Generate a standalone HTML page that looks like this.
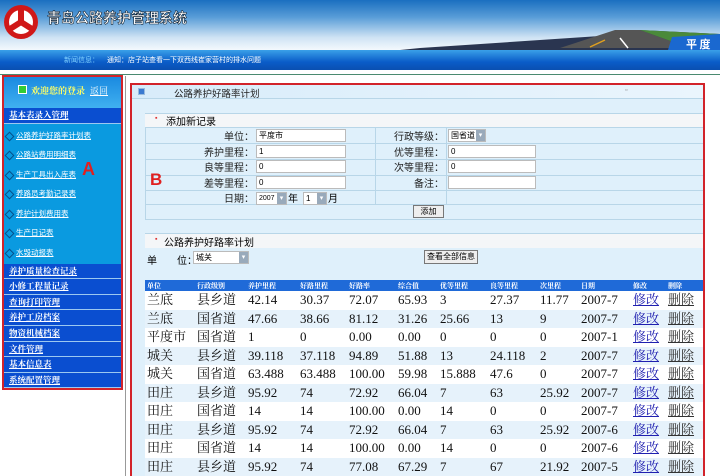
<!DOCTYPE html><html><head><meta charset="utf-8"><style>
*{margin:0;padding:0;box-sizing:border-box}
body{width:720px;height:476px;overflow:hidden;background:#fff;font-family:"Liberation Sans","Noto Sans CJK SC",sans-serif;position:relative;font-size:9px}
.abs{position:absolute}
#hdr{left:0;top:0;width:720px;height:50px;background:linear-gradient(180deg,#1a6fc0 0%,#5a9ed8 35%,#cfe3f4 75%,#f4f9fd 100%)}
#nav{left:0;top:50px;width:720px;height:20px;background:linear-gradient(180deg,#3aa0e8,#0a5cc8 60%,#0a4fb0)}
#line{left:0;top:70px;width:720px;height:5px;background:#fff;border-bottom:1px solid #4a8a70}
#side{left:2px;top:75px;width:121px;height:315px;border:2px solid #d2232a;background:#0a9ae0;overflow:hidden}
.mi{height:15.6px;background:#0a4ed0;border-bottom:1px solid #9cc8f0;color:#fff;font-weight:bold;font-size:8.5px;padding-left:5px;line-height:15px;text-decoration:underline;font-family:"Liberation Serif","Noto Serif CJK SC",serif}
.sub{height:19.5px;color:#fff;font-size:7.5px;padding-left:12px;line-height:18px;text-decoration:underline;position:relative}
.sub:before{content:"";position:absolute;left:2px;top:6px;width:5px;height:5px;border:1px solid #06508a;transform:rotate(45deg)}
#main{left:130px;top:83px;width:575px;height:393px;border:2px solid #d2232a;border-bottom:none;background:#dff0fb}
.lbl{position:absolute;text-align:right;font-size:10px;color:#222}
.inp{position:absolute;height:13px;background:#fff;border:1px solid #bbb;font-size:8px;line-height:11px;padding-left:2px;white-space:nowrap;overflow:hidden}
.dd{position:absolute;right:0;top:0;width:9px;height:11px;background:#9ab;color:#fff;font-size:7px;text-align:center}
.hl{position:absolute;left:145px;width:558px;height:1px;background:#b8d6e8}
table{position:absolute;left:145px;top:280px;width:558px;border-collapse:collapse;font-family:"Liberation Serif","Noto Serif CJK SC",serif;table-layout:fixed}
th{background:#1f6ad8;color:#fff;font-size:7px;text-align:left;height:11px;line-height:10px;padding:0 0 0 2px;font-weight:bold;overflow:hidden;white-space:nowrap}
td{font-size:13px;height:18.5px;line-height:14px;padding:0 0 0 2px;color:#111;white-space:nowrap;overflow:hidden}
tr:nth-child(even) td{background:#fff}
tr:nth-child(odd) td{background:#e6f2fb}
td a{color:#2020b0;text-decoration:underline}
td b{color:#333;font-weight:normal;text-decoration:underline}
</style></head><body>
<div id="hdr" class="abs"></div>
<svg class="abs" style="left:0;top:0" width="720" height="52">
<path d="M420 48 L600 36 L640 30 L720 34 L720 50 L400 50Z" fill="#2a3550"/>
<path d="M560 48 L615 30 L640 30 L690 48Z" fill="#555"/>
<path d="M640 30 L690 48 L720 48 L720 34Z" fill="#4a8a3a"/>
<path d="M590 47 L605 40" stroke="#e0a020" stroke-width="1.5"/>
<path d="M628 48 L620 38" stroke="#fff" stroke-width="1.5"/>
<path d="M672 37 L720 34 L720 50 L668 50Z" fill="#1a68d0"/>
<circle cx="21" cy="22" r="17" fill="#d01818"/><circle cx="21" cy="22" r="12" fill="#fff"/>
<path d="M21 22 L21 10 M21 22 L10 29 M21 22 L32 29" stroke="#d01818" stroke-width="6"/>
<text x="47" y="23" font-size="14" font-weight="bold" fill="#fff" stroke="#123" stroke-width="0.6" font-family="Noto Sans CJK SC">青岛公路养护管理系统</text>
<text x="686" y="48" font-size="11" font-weight="bold" fill="#fff" font-family="Noto Sans CJK SC">平 度</text>
</svg>
<div id="nav" class="abs"><span class="abs" style="left:64px;top:5px;color:#7fd0ff;font-size:7px">新闻信息：</span><span class="abs" style="left:107px;top:5px;color:#fff;font-size:7px">通知：店子站查看一下双西线崔家营村的排水问题</span></div>
<div id="line" class="abs"></div>
<div class="abs" style="left:125px;top:76px;width:1px;height:400px;background:#999"></div>
<div id="side" class="abs">
<div style="height:31px;background:linear-gradient(#1a8ae0,#40b0f0);position:relative"><div class="abs" style="left:14px;top:8px;width:9px;height:9px;background:#3c3;border:1px solid #fff"></div><span class="abs" style="left:27px;top:7px;color:#ff6;font-weight:bold;font-size:9px;font-family:'Noto Serif CJK SC',serif">欢迎您的登录</span><span class="abs" style="left:86px;top:7px;color:#fff;font-size:9px;text-decoration:underline;font-family:'Noto Serif CJK SC',serif">返回</span></div>
<div class="mi">基本表录入管理</div>
<div style="height:140px;padding-top:3px;overflow:hidden">
<div class="sub">公路养护好路率计划表</div><div class="sub">公路站费用明细表</div><div class="sub">生产工具出入库表</div><div class="sub">养路员考勤记录表</div><div class="sub">养护计划费用表</div><div class="sub">生产日记表</div><div class="sub">水毁动报表</div></div>
<div class="mi">养护质量检查记录</div><div class="mi">小修工程量记录</div><div class="mi">查询打印管理</div><div class="mi">养护工房档案</div><div class="mi">物资机械档案</div><div class="mi">文件管理</div><div class="mi">基本信息表</div><div class="mi">系统配置管理</div>
<span class="abs" style="left:78px;top:82px;color:#e02020;font-size:18px;font-weight:bold">A</span>
</div>
<div id="main" class="abs">
<div class="abs" style="left:0;top:0;width:571px;height:14px;background:linear-gradient(90deg,#d8ecfa,#eaf5fd);border-bottom:1px solid #b8d6e8"></div>
<div class="abs" style="left:6px;top:3px;width:7px;height:7px;background:#3a7ad0;border:1px solid #9bd"></div>
<span class="abs" style="left:42px;top:1px;font-size:9.5px;color:#222">公路养护好路率计划</span>
<span class="abs" style="left:493px;top:2px;font-size:7px;color:#888">▫</span>
</div>
<div class="abs" style="left:145px;top:113px;width:558px;height:14px;background:#f4f6f8;border-top:1px solid #b8d6e8"></div>
<span class="abs" style="left:155px;top:115px;color:#d33;font-size:7px">▪</span><span class="abs" style="left:166px;top:113px;font-size:10px">添加新记录</span>
<div class="hl" style="top:127px"></div><div class="hl" style="top:143px"></div><div class="hl" style="top:159px"></div><div class="hl" style="top:175px"></div><div class="hl" style="top:190px"></div><div class="hl" style="top:204px"></div><div class="hl" style="top:219px"></div>
<div class="abs" style="left:145px;top:127px;width:1px;height:92px;background:#b8d6e8"></div>
<div class="abs" style="left:375px;top:127px;width:1px;height:77px;background:#b8d6e8"></div>
<div class="abs" style="left:446px;top:127px;width:1px;height:77px;background:#b8d6e8"></div>
<div class="lbl" style="left:180px;width:74px;top:128px">单位：</div><div class="inp" style="left:256px;top:129px;width:90px">平度市</div>
<div class="lbl" style="left:180px;width:74px;top:144px">养护里程：</div><div class="inp" style="left:256px;top:145px;width:90px">1</div>
<div class="lbl" style="left:180px;width:74px;top:159px">良等里程：</div><div class="inp" style="left:256px;top:160px;width:90px">0</div>
<div class="lbl" style="left:180px;width:74px;top:175px">差等里程：</div><div class="inp" style="left:256px;top:176px;width:90px">0</div>
<div class="lbl" style="left:180px;width:74px;top:190px">日期：</div>
<div class="inp" style="left:256px;top:192px;width:31px;font-size:7px">2007<span class="dd">▾</span></div><span class="abs" style="left:288px;top:190px;font-size:10px">年</span>
<div class="inp" style="left:303px;top:192px;width:24px">1<span class="dd">▾</span></div><span class="abs" style="left:328px;top:190px;font-size:10px">月</span>
<div class="lbl" style="left:380px;width:64px;top:128px">行政等级：</div><div class="inp" style="left:448px;top:129px;width:38px">国省道<span class="dd">▾</span></div>
<div class="lbl" style="left:380px;width:64px;top:144px">优等里程：</div><div class="inp" style="left:448px;top:145px;width:88px">0</div>
<div class="lbl" style="left:380px;width:64px;top:159px">次等里程：</div><div class="inp" style="left:448px;top:160px;width:88px">0</div>
<div class="lbl" style="left:380px;width:64px;top:175px">备注：</div><div class="inp" style="left:448px;top:176px;width:88px"></div>
<div class="abs" style="left:413px;top:205px;width:31px;height:13px;border:1px solid #777;background:#eee;font-size:8px;text-align:center;line-height:11px">添加</div>
<span class="abs" style="left:150px;top:170px;color:#e02020;font-size:17px;font-weight:bold">B</span>
<div class="abs" style="left:145px;top:233px;width:558px;height:15px;background:#f4f6f8;border-top:1px solid #b8d6e8"></div>
<span class="abs" style="left:155px;top:236px;color:#d33;font-size:7px">▪</span><span class="abs" style="left:164px;top:234px;font-size:10px">公路养护好路率计划</span>
<span class="abs" style="left:147px;top:252px;font-size:10px">单　　位：</span>
<div class="inp" style="left:193px;top:251px;width:56px">城关<span class="dd">▾</span></div>
<div class="abs" style="left:424px;top:250px;width:54px;height:14px;border:1px solid #777;background:#eee;font-size:8px;text-align:center;line-height:12px">查看全部信息</div>
<table>
<colgroup><col style="width:50px"><col style="width:51px"><col style="width:52px"><col style="width:49px"><col style="width:49px"><col style="width:42px"><col style="width:50px"><col style="width:50px"><col style="width:41px"><col style="width:52px"><col style="width:35px"><col></colgroup>
<tr><th>单位</th><th>行政级别</th><th>养护里程</th><th>好路里程</th><th>好路率</th><th>综合值</th><th>优等里程</th><th>良等里程</th><th>次里程</th><th>日期</th><th>修改</th><th>删除</th></tr>
<tr><td>兰底</td><td>县乡道</td><td>42.14</td><td>30.37</td><td>72.07</td><td>65.93</td><td>3</td><td>27.37</td><td>11.77</td><td>2007-7</td><td><a>修改</a></td><td><b>删除</b></td></tr>
<tr><td>兰底</td><td>国省道</td><td>47.66</td><td>38.66</td><td>81.12</td><td>31.26</td><td>25.66</td><td>13</td><td>9</td><td>2007-7</td><td><a>修改</a></td><td><b>删除</b></td></tr>
<tr><td>平度市</td><td>国省道</td><td>1</td><td>0</td><td>0.00</td><td>0.00</td><td>0</td><td>0</td><td>0</td><td>2007-1</td><td><a>修改</a></td><td><b>删除</b></td></tr>
<tr><td>城关</td><td>县乡道</td><td>39.118</td><td>37.118</td><td>94.89</td><td>51.88</td><td>13</td><td>24.118</td><td>2</td><td>2007-7</td><td><a>修改</a></td><td><b>删除</b></td></tr>
<tr><td>城关</td><td>国省道</td><td>63.488</td><td>63.488</td><td>100.00</td><td>59.98</td><td>15.888</td><td>47.6</td><td>0</td><td>2007-7</td><td><a>修改</a></td><td><b>删除</b></td></tr>
<tr><td>田庄</td><td>县乡道</td><td>95.92</td><td>74</td><td>72.92</td><td>66.04</td><td>7</td><td>63</td><td>25.92</td><td>2007-7</td><td><a>修改</a></td><td><b>删除</b></td></tr>
<tr><td>田庄</td><td>国省道</td><td>14</td><td>14</td><td>100.00</td><td>0.00</td><td>14</td><td>0</td><td>0</td><td>2007-7</td><td><a>修改</a></td><td><b>删除</b></td></tr>
<tr><td>田庄</td><td>县乡道</td><td>95.92</td><td>74</td><td>72.92</td><td>66.04</td><td>7</td><td>63</td><td>25.92</td><td>2007-6</td><td><a>修改</a></td><td><b>删除</b></td></tr>
<tr><td>田庄</td><td>国省道</td><td>14</td><td>14</td><td>100.00</td><td>0.00</td><td>14</td><td>0</td><td>0</td><td>2007-6</td><td><a>修改</a></td><td><b>删除</b></td></tr>
<tr><td>田庄</td><td>县乡道</td><td>95.92</td><td>74</td><td>77.08</td><td>67.29</td><td>7</td><td>67</td><td>21.92</td><td>2007-5</td><td><a>修改</a></td><td><b>删除</b></td></tr>
</table>
</body></html>
